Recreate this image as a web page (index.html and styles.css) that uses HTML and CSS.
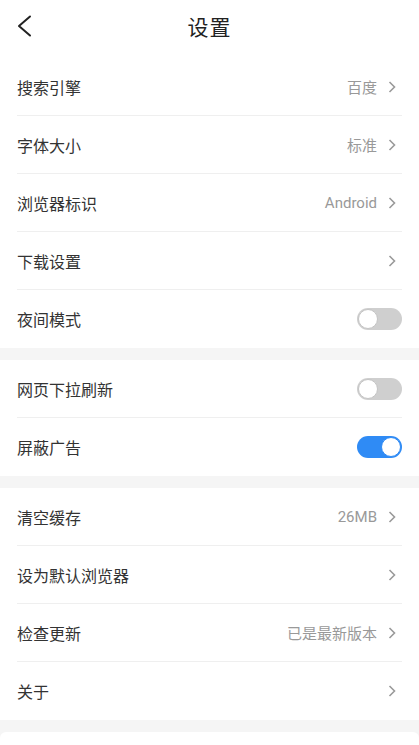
FILE: index.html
```html
<!DOCTYPE html>
<html lang="zh-CN">
<head>
<meta charset="utf-8">
<title>设置</title>
<link rel="stylesheet" href="styles.css">
</head>
<body>
<div class="page">
  <header class="header">
    <div class="header-bar">
      <svg class="back" width="16" height="22" viewBox="0 0 16 22"><polyline points="13,1.5 2,11 13,20.5" fill="none" stroke="#222" stroke-width="2" stroke-linecap="round" stroke-linejoin="round"/></svg>
      <h1 class="title">设置</h1>
      <span></span>
    </div>
  </header>

  <section class="group">
    <div class="row"><span class="label">搜索引擎</span><span class="value">百度</span><svg class="chev" width="8" height="12" viewBox="0 0 8 12"><polyline points="1.5,1 6.5,6 1.5,11" fill="none" stroke="#9a9a9a" stroke-width="1.6"/></svg></div>
    <div class="row"><span class="label">字体大小</span><span class="value">标准</span><svg class="chev" width="8" height="12" viewBox="0 0 8 12"><polyline points="1.5,1 6.5,6 1.5,11" fill="none" stroke="#9a9a9a" stroke-width="1.6"/></svg></div>
    <div class="row"><span class="label">浏览器标识</span><span class="value">Android</span><svg class="chev" width="8" height="12" viewBox="0 0 8 12"><polyline points="1.5,1 6.5,6 1.5,11" fill="none" stroke="#9a9a9a" stroke-width="1.6"/></svg></div>
    <div class="row"><span class="label">下载设置</span><span class="value"></span><svg class="chev" width="8" height="12" viewBox="0 0 8 12"><polyline points="1.5,1 6.5,6 1.5,11" fill="none" stroke="#9a9a9a" stroke-width="1.6"/></svg></div>
    <div class="row"><span class="label">夜间模式</span><span class="toggle"><span class="knob"></span></span></div>
  </section>

  <section class="group">
    <div class="row"><span class="label">网页下拉刷新</span><span class="toggle"><span class="knob"></span></span></div>
    <div class="row"><span class="label">屏蔽广告</span><span class="toggle on"><span class="knob"></span></span></div>
  </section>

  <section class="group">
    <div class="row"><span class="label">清空缓存</span><span class="value">26MB</span><svg class="chev" width="8" height="12" viewBox="0 0 8 12"><polyline points="1.5,1 6.5,6 1.5,11" fill="none" stroke="#9a9a9a" stroke-width="1.6"/></svg></div>
    <div class="row"><span class="label">设为默认浏览器</span><span class="value"></span><svg class="chev" width="8" height="12" viewBox="0 0 8 12"><polyline points="1.5,1 6.5,6 1.5,11" fill="none" stroke="#9a9a9a" stroke-width="1.6"/></svg></div>
    <div class="row"><span class="label">检查更新</span><span class="value">已是最新版本</span><svg class="chev" width="8" height="12" viewBox="0 0 8 12"><polyline points="1.5,1 6.5,6 1.5,11" fill="none" stroke="#9a9a9a" stroke-width="1.6"/></svg></div>
    <div class="row"><span class="label">关于</span><span class="value"></span><svg class="chev" width="8" height="12" viewBox="0 0 8 12"><polyline points="1.5,1 6.5,6 1.5,11" fill="none" stroke="#9a9a9a" stroke-width="1.6"/></svg></div>
  </section>

  <div class="footer-card"></div>
</div>
</body>
</html>
```

FILE: styles.css
```css
html, body {
  margin: 0;
  padding: 0;
  background: #f5f5f5;
  font-family: "Roboto", "Noto Sans CJK SC", sans-serif;
}
.page {
  width: 419px;
  min-height: 745px;
  display: flex;
  flex-direction: column;
  gap: 12px;
  overflow: hidden;
}
.header {
  background: #fff;
  height: 58px;
  margin-bottom: -12px;
}
.header-bar {
  height: 52px;
  display: grid;
  grid-template-columns: 1fr auto 1fr;
  align-items: center;
}
.back {
  margin-left: 17px;
}
.title {
  margin: 0;
  font-size: 21px;
  font-weight: 400;
  color: #222;
  letter-spacing: 1px;
}
.group {
  background: #fff;
  padding: 0 17px;
}
.row {
  box-sizing: border-box;
  height: 58px;
  display: flex;
  align-items: center;
  border-bottom: 1px solid #efefef;
}
.row:last-child {
  border-bottom: none;
}
.label {
  flex: 1;
  font-size: 16px;
  color: #333;
}
.value {
  font-size: 15px;
  color: #999;
  margin-right: 11px;
}
.chev {
  margin-right: 6px;
}
.toggle {
  width: 45px;
  height: 22px;
  border-radius: 11px;
  background: #cfcfcf;
  display: flex;
  align-items: center;
  padding: 0 1px;
  box-sizing: border-box;
}
.knob {
  width: 20px;
  height: 20px;
  box-sizing: border-box;
  border-radius: 50%;
  background: #fff;
  border: 1px solid #c4c4c4;
}
.toggle.on {
  background: #2f8bf5;
  justify-content: flex-end;
}
.toggle.on .knob {
  border-color: #2f8bf5;
}
.footer-card {
  background: #fff;
  height: 40px;
  border-radius: 6px 6px 0 0;
}
```
